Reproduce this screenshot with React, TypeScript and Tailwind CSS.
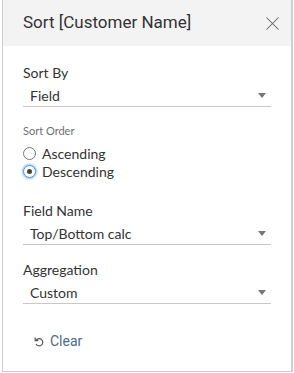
import { X } from 'lucide-react';

function Select({ value }: { value: string }) {
  return (
    <div className="h-[22px] box-content border-b border-[#c8c8c8] flex items-center pl-[7px] pr-[5px]">
      <span className="flex-1 text-[14px] text-[#333]">{value}</span>
      <svg width="8" height="5" viewBox="0 0 8 5" className="shrink-0">
        <path d="M0 0 H8 L4 5 Z" fill="#777" />
      </svg>
    </div>
  );
}

function Radio({ label, checked }: { label: string; checked?: boolean }) {
  return (
    <div className="h-[18px] flex items-center gap-[6px]">
      <span
        className={`w-[13px] h-[13px] rounded-full border flex items-center justify-center shrink-0 ${
          checked ? 'border-[#4d8fd6] shadow-[0_0_2px_1px_rgba(80,150,230,0.6)]' : 'border-[#777]'
        }`}
      >
        {checked && <span className="w-[5px] h-[5px] rounded-full bg-[#444]" />}
      </span>
      <span className="text-[14px] text-[#333]">{label}</span>
    </div>
  );
}

export default function App() {
  return (
    <div className="w-[294px] h-[373px] bg-white" style={{ fontFamily: 'Lato, "Noto Sans", sans-serif' }}>
      <div className="ml-[2px] w-[291px] h-[372px] border-l border-b border-r-2 border-[#cfcfcf] bg-white flex flex-col">
        {/* Header */}
        <div className="h-[46px] bg-[#f3f3f3] flex items-center pl-[20px] pr-[7px] shrink-0">
          <span
            className="flex-1 text-[17px] text-[#333]"
            style={{ fontFamily: 'Roboto, "Noto Sans", sans-serif' }}
          >
            Sort [Customer Name]
          </span>
          <X className="w-[23px] h-[23px] text-[#666]" strokeWidth={1.1} />
        </div>

        <div className="px-[20px] flex flex-col">
          <div className="mt-[17px] mb-px leading-[20px] text-[14px] text-[#333]">Sort By</div>
          <Select value="Field" />

          <div className="mt-[16px] leading-[16px] text-[11px] text-[#6e6e6e]">Sort Order</div>
          <div className="mt-[5px] flex flex-col">
            <Radio label="Ascending" />
            <Radio label="Descending" checked />
          </div>

          <div className="mt-[21px] mb-px leading-[20px] text-[14px] text-[#333]">Field Name</div>
          <Select value="Top/Bottom calc" />

          <div className="mt-[15px] mb-px leading-[20px] text-[14px] text-[#333]">Aggregation</div>
          <Select value="Custom" />

          <div
            className="mt-[27px] ml-[11px] h-[20px] flex items-center gap-[6px]"
            style={{ fontFamily: 'Roboto, "Noto Sans", sans-serif' }}
          >
            <svg width="10" height="11" viewBox="0 0 10 11" fill="none" stroke="#555" strokeWidth="1.2">
              <path d="M2.2 4.2 A3.6 3.6 0 1 1 2 8" />
              <path d="M1.2 1.5 V4.6 H4.3" />
            </svg>
            <span className="text-[14px] text-[#4d6a8a]">Clear</span>
          </div>
        </div>
      </div>
    </div>
  );
}
